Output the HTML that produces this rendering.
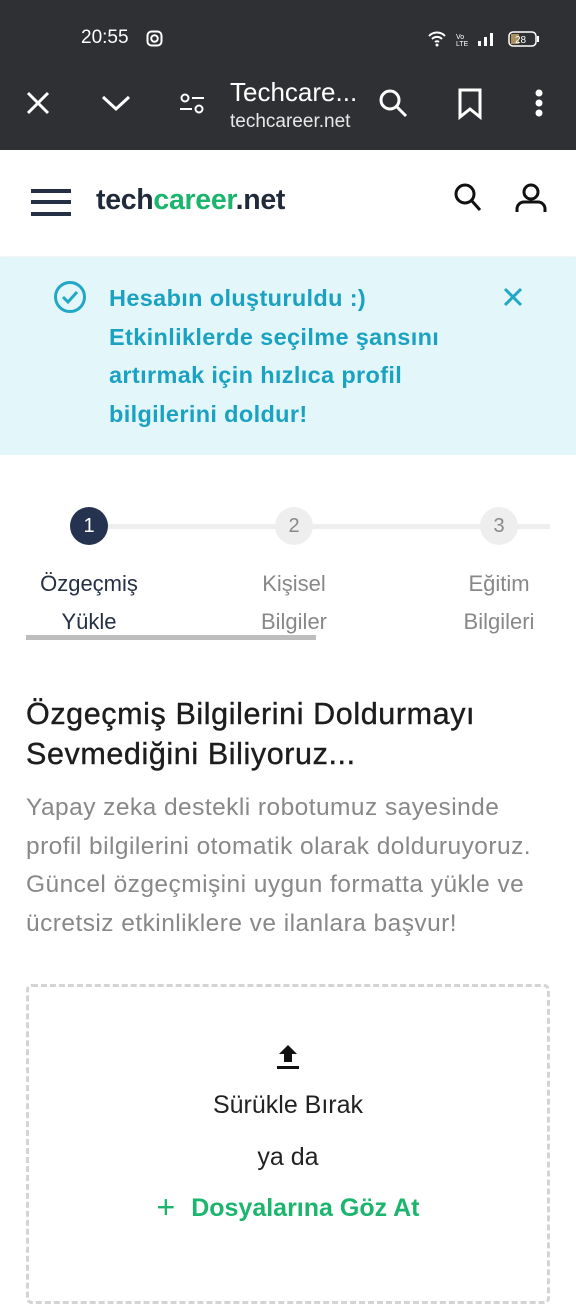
<!DOCTYPE html>
<html><head><meta charset="utf-8"><style>
*{margin:0;padding:0;box-sizing:border-box}
body{width:576px;height:1280px;overflow:hidden;background:#fff;font-family:"Liberation Sans",sans-serif;position:relative}
.abs{position:absolute}
.top{left:0;top:0;width:576px;height:150px;background:#2f3033;color:#fff}
</style></head><body>
<div class="abs top">
 <div class="abs" style="left:81px;top:27px;font-size:19px">20:55</div>
 <svg class="abs" style="left:146px;top:30px" width="17" height="17" viewBox="0 0 17 17"><rect x="1.5" y="1.5" width="14" height="14" rx="4" fill="none" stroke="#fff" stroke-width="2"/><circle cx="8.5" cy="8.5" r="3.3" fill="none" stroke="#fff" stroke-width="2"/></svg>
 <svg class="abs" style="left:428px;top:30px" width="112" height="18" viewBox="0 0 112 18"><path d="M1 6a11 11 0 0 1 16 0M4 9a7 7 0 0 1 10 0M7 12a3 3 0 0 1 4 0" stroke="#fff" stroke-width="2" fill="none"/><circle cx="9" cy="15" r="1.5" fill="#fff"/><text x="28" y="9" font-size="7" fill="#fff" font-family="Liberation Sans">Vo</text><text x="28" y="16" font-size="7" fill="#fff" font-family="Liberation Sans">LTE</text><rect x="50" y="11" width="3" height="5" fill="#fff"/><rect x="56" y="7" width="3" height="9" fill="#fff"/><rect x="62" y="3" width="3" height="13" fill="#fff"/><rect x="81" y="2" width="27" height="14" rx="4" fill="none" stroke="#fff" stroke-width="1.5"/><rect x="83" y="4" width="8" height="10" fill="#a89060"/><rect x="109" y="6" width="2" height="6" fill="#fff"/><text x="87" y="13" font-size="10" fill="#fff" font-family="Liberation Sans">28</text></svg>
 <svg class="abs" style="left:26px;top:91px" width="24" height="24"><path d="M2 2L22 22M22 2L2 22" stroke="#fff" stroke-width="3"/></svg>
 <svg class="abs" style="left:101px;top:94px" width="30" height="18"><path d="M2 3L15 15L28 3" stroke="#fff" stroke-width="3" fill="none"/></svg>
 <svg class="abs" style="left:178px;top:92px" width="28" height="24"><circle cx="7" cy="6" r="3.5" stroke="#fff" stroke-width="2" fill="none"/><path d="M14 6h12M2 17h12" stroke="#fff" stroke-width="2"/><circle cx="21" cy="17" r="3.5" stroke="#fff" stroke-width="2" fill="none"/></svg>
 <div class="abs" style="left:230px;top:77px;font-size:26px">Techcare...</div>
 <div class="abs" style="left:230px;top:111px;font-size:19px;color:#e8e8e8">techcareer.net</div>
 <svg class="abs" style="left:378px;top:88px" width="32" height="32"><circle cx="12" cy="12" r="9" stroke="#fff" stroke-width="3" fill="none"/><path d="M18.5 18.5L28 28" stroke="#fff" stroke-width="3"/></svg>
 <svg class="abs" style="left:457px;top:88px" width="26" height="32"><path d="M3 2h20v27l-10-8-10 8z" stroke="#fff" stroke-width="3" fill="none"/></svg>
 <svg class="abs" style="left:533px;top:88px" width="12" height="32"><circle cx="6" cy="5" r="3.5" fill="#fff"/><circle cx="6" cy="15" r="3.5" fill="#fff"/><circle cx="6" cy="25" r="3.5" fill="#fff"/></svg>
</div>
<div class="abs" style="left:0;top:150px;width:576px;height:106px;background:#fff;box-shadow:0 2px 4px rgba(0,0,0,.06)"></div>
<svg class="abs" style="left:30px;top:188px" width="42" height="30"><path d="M1 3h40M1 14h40M1 26h40" stroke="#253044" stroke-width="4"/></svg>
<div class="abs" style="left:96px;top:184px;font-size:28.5px;font-weight:bold;color:#1f2a3a;letter-spacing:-.3px">tech<span style="color:#1cb56d">career</span>.net</div>
<svg class="abs" style="left:452px;top:182px" width="32" height="32"><circle cx="13" cy="12" r="9" stroke="#111" stroke-width="3" fill="none"/><path d="M19.5 18.5L28 28" stroke="#111" stroke-width="3"/></svg>
<svg class="abs" style="left:514px;top:182px" width="34" height="32"><circle cx="17" cy="10" r="7" stroke="#111" stroke-width="3" fill="none"/><path d="M3 30v-3a7 7 0 0 1 7-7h14a7 7 0 0 1 7 7v3" stroke="#111" stroke-width="3" fill="none"/></svg>
<div class="abs" style="left:0;top:257px;width:576px;height:198px;background:#e3f6fa"></div>
<svg class="abs" style="left:53px;top:280px" width="34" height="34"><circle cx="17" cy="17" r="14.5" stroke="#22a7c6" stroke-width="3" fill="none"/><path d="M10 17l5 5 9-10" stroke="#22a7c6" stroke-width="3" fill="none"/></svg>
<div class="abs" style="left:109px;top:279px;font-size:23.5px;font-weight:bold;color:#1ba2c2;line-height:38.5px;letter-spacing:.35px;white-space:nowrap">Hesabın oluşturuldu :)<br>Etkinliklerde seçilme şansını<br>artırmak için hızlıca profil<br>bilgilerini doldur!</div>
<svg class="abs" style="left:503px;top:287px" width="20" height="20"><path d="M2 2L18 18M18 2L2 18" stroke="#22a7c6" stroke-width="3"/></svg>
<div class="abs" style="left:88px;top:524px;width:462px;height:5px;background:#eeeeee"></div>
<div class="abs" style="left:70px;top:507px;width:38px;height:38px;border-radius:50%;background:#253350;color:#fff;font-size:20px;text-align:center;line-height:38px">1</div>
<div class="abs" style="left:275px;top:507px;width:38px;height:38px;border-radius:50%;background:#eeeeee;color:#888;font-size:20px;text-align:center;line-height:38px">2</div>
<div class="abs" style="left:480px;top:507px;width:38px;height:38px;border-radius:50%;background:#eeeeee;color:#888;font-size:20px;text-align:center;line-height:38px">3</div>
<div class="abs" style="left:9px;top:565px;width:160px;text-align:center;font-size:22px;line-height:38px;color:#253044">Özgeçmiş<br>Yükle</div>
<div class="abs" style="left:214px;top:565px;width:160px;text-align:center;font-size:22px;line-height:38px;color:#888">Kişisel<br>Bilgiler</div>
<div class="abs" style="left:419px;top:565px;width:160px;text-align:center;font-size:22px;line-height:38px;color:#888">Eğitim<br>Bilgileri</div>
<div class="abs" style="left:26px;top:635px;width:290px;height:5px;background:#bdbdbd"></div>
<div class="abs" style="left:26px;top:694px;font-size:30.5px;letter-spacing:.6px;line-height:40px;color:#1d1d1d;white-space:nowrap;-webkit-text-stroke:.4px #1d1d1d">Özgeçmiş Bilgilerini Doldurmayı<br>Sevmediğini Biliyoruz...</div>
<div class="abs" style="left:26px;top:789px;font-size:24.5px;letter-spacing:.45px;line-height:38.7px;color:#888;white-space:nowrap">Yapay zeka destekli robotumuz sayesinde<br>profil bilgilerini otomatik olarak dolduruyoruz.<br>Güncel özgeçmişini uygun formatta yükle ve<br>ücretsiz etkinliklere ve ilanlara başvur!</div>
<div class="abs" style="left:26px;top:984px;width:524px;height:320px;border:3px dashed #d4d4d4;border-radius:6px"></div>
<svg class="abs" style="left:276px;top:1043px" width="24" height="28"><path d="M12 2L3 11h5v8h8v-8h5z" fill="#111"/><rect x="1" y="23" width="22" height="3" fill="#111"/></svg>
<div class="abs" style="left:0;top:1091px;width:576px;text-align:center;font-size:25px;color:#222">Sürükle Bırak</div>
<div class="abs" style="left:0;top:1143px;width:576px;text-align:center;font-size:25px;color:#222">ya da</div>
<div class="abs" style="left:0;top:1189px;width:576px;text-align:center;font-size:25px;font-weight:bold;color:#1cb56d"><span style="font-weight:normal;font-size:32px;margin-right:16px;vertical-align:-2px">+</span>Dosyalarına Göz At</div>
</body></html>
